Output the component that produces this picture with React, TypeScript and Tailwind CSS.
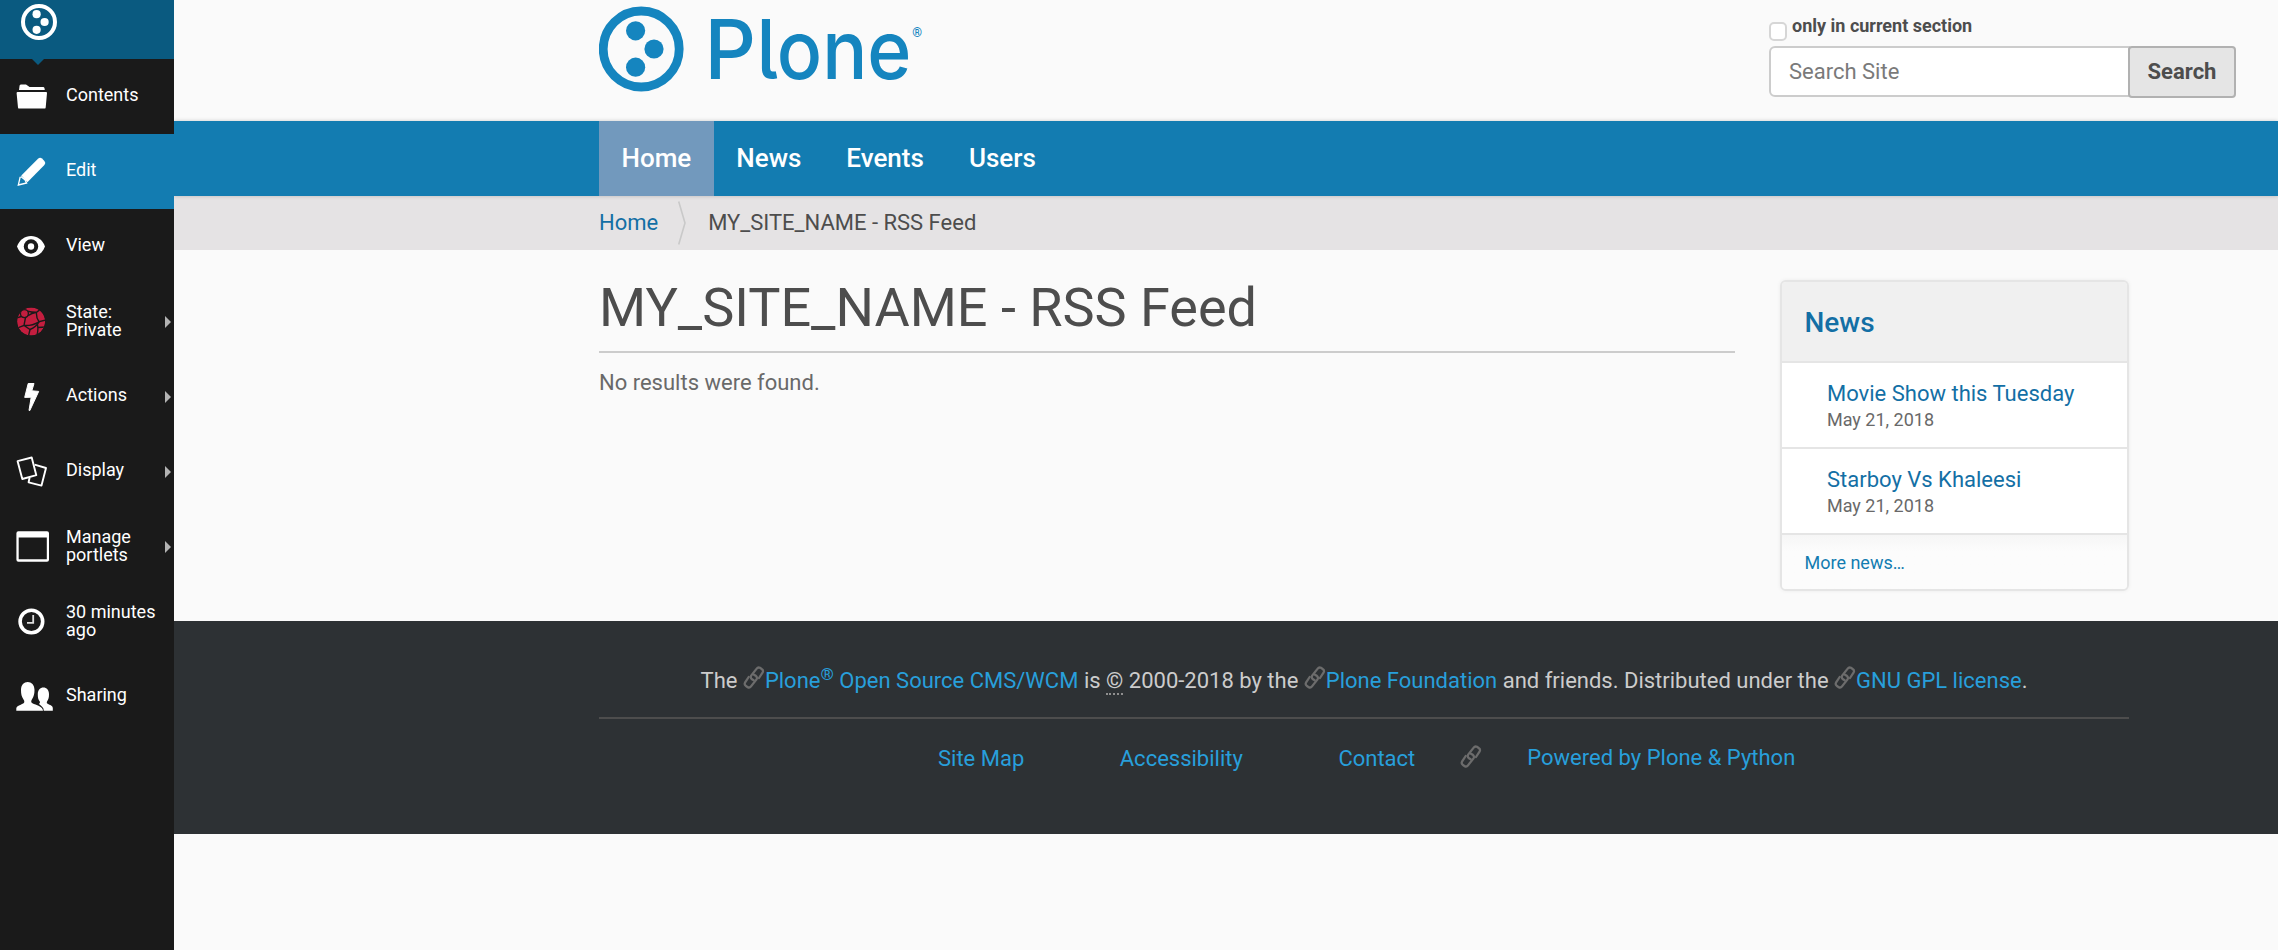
import type { ReactNode } from "react";

type ToolbarItem = {
  lines: string[];
  icon: ReactNode;
  active?: boolean;
  submenu?: boolean;
};

function Icon({ children }: { children: ReactNode }) {
  return (
    <svg viewBox="0 0 66 75" className="h-[75px] w-[66px] shrink-0" fill="#fff">
      {children}
    </svg>
  );
}

const items: ToolbarItem[] = [
  {
    lines: ["Contents"],
    icon: (
      <Icon>
        <path d="M19 31 L19.6 26.6 Q19.9 25.4 21.2 25.4 H26 L29.6 28 H43 Q44.3 28 44.5 29.3 L44.8 31 Z" />
        <path d="M17.6 33 H46.2 Q47 33 47 34 L45.7 48.4 Q45.5 49.6 44.4 49.6 H19.3 Q18.1 49.6 18 48.4 L16.6 34 Q16.6 33 17.6 33 Z" />
      </Icon>
    ),
  },
  {
    lines: ["Edit"],
    active: true,
    icon: (
      <Icon>
        <path d="M21.3 41.6 L38 24.8 Q40 22.8 42 24.6 L44.4 27 Q46.2 29 44.4 31 L27.4 48.2 Z" />
        <path
          d="M20.2 42.8 L18.3 51 L26.6 49 L24.9 45.8 L20.8 42.6"
          fill="none"
          stroke="#fff"
          strokeWidth="1.3"
        />
      </Icon>
    ),
  },
  {
    lines: ["View"],
    icon: (
      <Icon>
        <path d="M17 37.5 C19.5 30.5 25 27 31 27 S42.5 30.5 45 37.5 C42.5 44.5 37 48 31 48 S19.5 44.5 17 37.5 Z" />
        <circle cx="31" cy="37.5" r="7.2" fill="#1a1a1a" />
        <circle cx="31" cy="37.5" r="3.2" />
      </Icon>
    ),
  },
  {
    lines: ["State:", "Private"],
    submenu: true,
    icon: (
      <Icon>
        <clipPath id="globe">
          <circle cx="31.1" cy="37.5" r="14" />
        </clipPath>
        <g clipPath="url(#globe)">
          <circle cx="31.1" cy="37.5" r="14" fill="#c41e3f" />
          <g fill="none" stroke="#1a1a1a" strokeWidth="1.4">
            <circle cx="24.4" cy="29.6" r="4" />
            <path d="M27.8 27.3 Q32 28.3 36.5 28.2 L43 23.5 M36.5 28.2 Q31.5 29 28 31.8 M36.5 28.2 Q36 34 39 37.8 L46 36" />
            <path d="M25.5 33.5 L24 41.5 L16 44.5 M24 41.5 Q32 42 39 37.8 M24 41.5 L30 45.5 L28.5 52 M21.5 32.5 L16 34" />
            <path d="M39 37.8 Q36 43 30 45.5 M37.5 40.5 Q38.5 46 37 51 M38 43.5 L46 43" />
          </g>
        </g>
      </Icon>
    ),
  },
  {
    lines: ["Actions"],
    submenu: true,
    icon: (
      <Icon>
        <path
          d="M28.2 24.5 H34 L31.8 31.8 L38.7 32.4 L29.8 51.6 L29 51.4 L31.2 38.2 L24.7 38.4 Z"
          stroke="#fff"
          strokeWidth="1"
          strokeLinejoin="round"
        />
      </Icon>
    ),
  },
  {
    lines: ["Display"],
    submenu: true,
    icon: (
      <Icon>
        <g fill="none" stroke="#fff" strokeWidth="1.9" strokeLinejoin="round">
          <path d="M17.6 27.2 L31.7 23.5 L36.3 41.2 L22.3 45 Z" />
          <path d="M34.6 30.7 L46 34 L41.5 51.6 L28.6 48.3 L29.6 43.5" />
        </g>
      </Icon>
    ),
  },
  {
    lines: ["Manage", "portlets"],
    submenu: true,
    icon: (
      <Icon>
        <path
          fillRule="evenodd"
          d="M18.4 22.3 H47 Q49 22.3 49 24.3 V50.8 Q49 52.8 47 52.8 H18.4 Q16.4 52.8 16.4 50.8 V24.3 Q16.4 22.3 18.4 22.3 Z M18.7 28.4 V50.3 H46.8 V28.4 Z"
        />
      </Icon>
    ),
  },
  {
    lines: ["30 minutes", "ago"],
    icon: (
      <Icon>
        <circle cx="31.4" cy="37.5" r="11.3" fill="none" stroke="#fff" strokeWidth="3.6" />
        <path d="M33.2 31 V38.8 H27" fill="none" stroke="#ddd" strokeWidth="1.8" />
      </Icon>
    ),
  },
  {
    lines: ["Sharing"],
    icon: (
      <Icon>
        <path d="M39 45 Q40.5 43.8 39.8 42.6 C38.2 40.4 37.8 38.4 37.8 35.4 C37.8 31 40.2 28.6 43.4 28.6 S49 31 49 35.4 C49 38.6 48.4 40.4 47 42.4 Q46.2 44 47.6 44.8 C50 46 52.8 47 52.8 49 V51.7 H43.8 C43.8 48.5 41.5 47 39 45 Z" />
        <path d="M16.3 51.7 V49.4 C16.3 47.2 20 46 23.2 44.4 C24.8 43.6 24.5 41.8 23.5 40.4 C21.6 37.6 21 35 21 31 C21 25.8 24 23 27.7 23 S34.5 25.8 34.5 31 C34.5 35 33.8 37.6 32 40.2 C31 41.8 30.8 43.4 32.4 44.2 C36 46 43 47.4 43 51.7 Z" />
      </Icon>
    ),
  },
];

function Toolbar() {
  return (
    <nav className="relative z-10 flex w-[174px] shrink-0 flex-col bg-[#1a1a1a] text-[18px] leading-[18px] text-white">
      <div className="relative h-[59px] bg-[#0a5a80]">
        <svg viewBox="0 0 174 66" className="block h-[66px] w-[174px]" fill="#fff">
          <circle cx="39" cy="22" r="16" fill="none" stroke="#fff" strokeWidth="4" />
          <circle cx="36.6" cy="14.2" r="4.1" />
          <circle cx="44.6" cy="22" r="4.1" />
          <circle cx="36.6" cy="29.8" r="4.1" />
          <path d="M32 59 H44 L38 65 Z" fill="#0a5a80" />
        </svg>
      </div>
      {items.map((item) => (
        <a
          key={item.lines[0]}
          className={`flex h-[75px] items-center ${item.active ? "bg-[#137cb1]" : ""}`}
        >
          {item.icon}
          <span className={`flex-1 ${item.lines.length === 1 ? "pb-[3px]" : "pb-px"}`}>
            {item.lines.map((line) => (
              <span key={line} className="block whitespace-nowrap">
                {line}
              </span>
            ))}
          </span>
          {item.submenu && (
            <svg viewBox="0 0 6 12" className="mt-[1px] mr-[3px] h-3 w-[6px]">
              <path d="M0 0 L6 6 L0 12 Z" fill="#b3b3b3" />
            </svg>
          )}
        </a>
      ))}
    </nav>
  );
}

function Logo() {
  return (
    <svg viewBox="0 0 330 92" className="h-[92px] w-[330px]" fill="#1585bf">
      <circle cx="42.2" cy="49" r="38" fill="none" stroke="#1585bf" strokeWidth="8.8" />
      <circle cx="36.6" cy="30.8" r="9.6" />
      <circle cx="55" cy="49" r="9.6" />
      <circle cx="36.6" cy="67.2" r="9.6" />
      <text
        y="78.8"
        className="font-['Inter'] text-[82px] font-medium"
        style={{ fontFeatureSettings: '"cv05" 1' }}
      >
        <tspan x="105.5" textLength="51.5" lengthAdjust="spacingAndGlyphs">
          P
        </tspan>
        <tspan x="157.5" textLength="155" lengthAdjust="spacingAndGlyphs">
          lone
        </tspan>
      </text>
      <text x="313.3" y="36.5" className="font-['Roboto'] text-[12.5px] font-bold">
        ®
      </text>
    </svg>
  );
}

function LinkIcon({ className = "" }: { className?: string }) {
  return (
    <svg
      viewBox="22 34 66 69"
      className={`inline-block h-[23px] w-[22px] ${className}`}
      fill="none"
      stroke="#6c6c6c"
      strokeWidth="6.8"
      strokeLinecap="round"
    >
      <path d="M70 70 L81 53 Q84 47 78 43 L73 39.5 Q67 36.5 63 42 L46.5 63 Q43 69 49 74 L54 77" />
      <path d="M39 67 L28 84 Q25 90 31 94 L36 97.5 Q42 100.5 46 95 L62.5 74 Q66 68 60 63 L55 60" />
    </svg>
  );
}

const news = [
  { title: "Movie Show this Tuesday", date: "May 21, 2018" },
  { title: "Starboy Vs Khaleesi", date: "May 21, 2018" },
];

export default function App() {
  return (
    <div className="flex h-[950px] w-[2278px] overflow-hidden bg-[#fafafa] font-['Roboto',sans-serif] text-[22px] text-[#696969]">
      <Toolbar />
      <div className="flex min-w-0 flex-1 flex-col">
        <header className="flex h-[121px] justify-between pr-[42px] pl-[425px]">
          <Logo />
          <div className="flex w-[467px] flex-col">
            <label className="flex h-[46px] items-start gap-[5px] text-[18px] leading-[26px] font-bold text-[#4d4d4d]">
              <span className="mt-[22px] h-[19px] w-[18px] rounded-[5px] border-2 border-[#d6d6d6] bg-white" />
              <span className="mt-[13px]">only in current section</span>
            </label>
            <div className="flex items-start">
              <input
                placeholder="Search Site"
                className="h-[51px] w-[361px] rounded-l-[6px] border-2 border-[#ccc] bg-white px-[18px] placeholder:text-[#7a7a7a]"
              />
              <button className="-ml-[2px] h-[52px] w-[108px] rounded-[4px] border-2 border-[#b1b1b1] bg-[#e5e5e5] pb-px font-bold text-[#4d4d4d]">
                Search
              </button>
            </div>
          </div>
        </header>

        <nav className="relative flex h-[75px] shrink-0 bg-[#137cb1] pl-[425px] text-[26px] leading-[75px] font-medium text-white shadow-[0_0_4px_rgba(0,0,0,0.2)]">
          {["Home", "News", "Events", "Users"].map((t, i) => (
            <a key={t} className={`px-[22.5px] ${i === 0 ? "bg-[#7299bd]" : ""}`}>
              {t}
            </a>
          ))}
        </nav>

        <div className="flex h-[54px] shrink-0 items-center bg-[#e5e3e4] pl-[425px] text-[#4d4d4d]">
          <a className="pb-[2px] text-[#136fa5]">Home</a>
          <svg viewBox="0 0 8 44" className="mr-[22px] ml-[20px] h-[44px] w-[8px]" fill="none">
            <path d="M0.7 0.5 L7 22 L0.7 43.5" stroke="#c9c9c9" strokeWidth="1.6" />
          </svg>
          <span className="pb-[2px]">MY_SITE_NAME - RSS Feed</span>
        </div>

        <div className="flex h-[371px] shrink-0 pl-[425px]">
          <main className="w-[1136px]">
            <h1 className="mt-[28px] h-[75px] border-b-2 border-[#ccc] text-[54px] leading-[60px] text-[#4d4d4d]">
              MY_SITE_NAME - RSS Feed
            </h1>
            <p className="mt-[14px] leading-[31px]">No results were found.</p>
          </main>
          <aside className="mt-[30px] ml-[45px] h-[311px] w-[349px] overflow-hidden rounded-[6px] border-2 border-[#e5e5e5] bg-[#fcfcfc] shadow-[0_0_4px_rgba(0,0,0,0.06)]">
            <h2 className="h-[81px] border-b-2 border-[#e5e5e5] bg-[#f0f0f0] pl-[22.5px] text-[28px] leading-[81px] font-medium text-[#136fa5]">
              News
            </h2>
            <ul>
              {news.map((n) => (
                <li
                  key={n.title}
                  className="h-[86px] border-b-2 border-[#e5e5e5] bg-white pt-[18px] pl-[45px]"
                >
                  <a className="block leading-[26px] text-[#136fa5]">{n.title}</a>
                  <span className="block text-[18px] leading-[26px]">{n.date}</span>
                </li>
              ))}
            </ul>
            <div className="h-[54px] bg-linear-to-b from-[#f6f6f6] to-[#fcfcfc] to-30% pl-[22.5px] text-[18px] leading-[56px] text-[#137cb1]">
              More news…
            </div>
          </aside>
        </div>

        <footer className="h-[213px] shrink-0 bg-[#2d3134] pr-[149px] pl-[425px] text-[#ccc]">
          <p className="h-[98px] border-b-2 border-[#4d4d4d] pt-[43px] text-center leading-[34px] whitespace-nowrap">
            The <LinkIcon className="-mt-[8px] align-[-1px]" />
            <a className="text-[#289fdb]">
              Plone<sup className="text-[17px]">®</sup> Open Source CMS/WCM
            </a>{" "}
            is <abbr className="border-b-2 border-dotted border-[#8f8f8f]">©</abbr> 2000-2018 by the{" "}
            <LinkIcon className="-mt-[8px] align-[-1px]" />
            <a className="text-[#289fdb]">Plone Foundation</a> and friends. Distributed under the{" "}
            <LinkIcon className="-mt-[8px] align-[-1px]" />
            <a className="text-[#289fdb]">GNU GPL license</a>.
          </p>
          <ul className="flex pt-[23px] pl-[339px] leading-[34px] whitespace-nowrap text-[#289fdb]">
            <li className="mr-[95.5px]">Site Map</li>
            <li className="mr-[95.5px]">Accessibility</li>
            <li className="mr-[45px]">Contact</li>
            <li className="-mt-px flex">
              <LinkIcon className="mt-[4px] mr-[45px]" />
              Powered by Plone &amp; Python
            </li>
          </ul>
        </footer>
      </div>
    </div>
  );
}
